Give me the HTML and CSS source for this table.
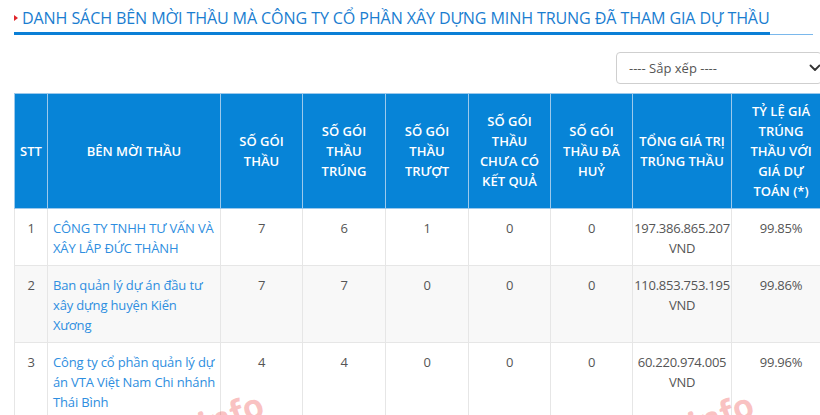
FILE: index.html
```html
<!DOCTYPE html>
<html lang="vi">
<head>
<meta charset="utf-8">
<title>Danh sách bên mời thầu</title>
<link rel="stylesheet" href="styles.css">
</head>
<body>
<div class="page">
  <div class="heading">
    <h2 class="heading-title"><span class="tri"></span>DANH SÁCH BÊN MỜI THẦU MÀ CÔNG TY CỔ PHẦN XÂY DỰNG MINH TRUNG ĐÃ THAM GIA DỰ THẦU</h2>
  </div>
  <div class="toolbar">
    <div class="select">
      <span>---- Sắp xếp ----</span>
      <svg class="chev" width="12" height="8" viewBox="0 0 12 8"><path d="M1.5 1.5 L6 6 L10.5 1.5" fill="none" stroke="#333" stroke-width="1.8" stroke-linecap="round" stroke-linejoin="round"/></svg>
    </div>
  </div>
  <table class="grid">
    <colgroup>
      <col class="c-stt"><col class="c-name"><col class="c-n1"><col class="c-n2"><col class="c-n3"><col class="c-n4"><col class="c-n5"><col class="c-val"><col class="c-pct">
    </colgroup>
    <thead>
      <tr>
        <th>STT</th>
        <th>BÊN MỜI THẦU</th>
        <th>SỐ GÓI<br>THẦU</th>
        <th>SỐ GÓI<br>THẦU<br>TRÚNG</th>
        <th>SỐ GÓI<br>THẦU<br>TRƯỢT</th>
        <th>SỐ GÓI<br>THẦU<br>CHƯA CÓ<br>KẾT QUẢ</th>
        <th>SỐ GÓI<br>THẦU ĐÃ<br>HUỶ</th>
        <th>TỔNG GIÁ TRỊ<br>TRÚNG THẦU</th>
        <th>TỶ LỆ GIÁ<br>TRÚNG<br>THẦU VỚI<br>GIÁ DỰ<br>TOÁN (*)</th>
      </tr>
    </thead>
    <tbody>
      <tr>
        <td class="ctr">1</td>
        <td class="name"><a href="#">CÔNG TY TNHH TƯ VẤN VÀ XÂY LẮP ĐỨC THÀNH</a></td>
        <td class="ctr">7</td><td class="ctr">6</td><td class="ctr">1</td><td class="ctr">0</td><td class="ctr">0</td>
        <td class="ctr">197.386.865.207 VND</td>
        <td class="ctr">99.85%</td>
      </tr>
      <tr class="alt">
        <td class="ctr">2</td>
        <td class="name"><a href="#">Ban quản lý dự án đầu tư xây dựng huyện Kiến Xương</a></td>
        <td class="ctr">7</td><td class="ctr">7</td><td class="ctr">0</td><td class="ctr">0</td><td class="ctr">0</td>
        <td class="ctr">110.853.753.195 VND</td>
        <td class="ctr">99.86%</td>
      </tr>
      <tr>
        <td class="ctr">3</td>
        <td class="name"><a href="#">Công ty cổ phần quản lý dự án VTA Việt Nam Chi nhánh Thái Bình</a></td>
        <td class="ctr">4</td><td class="ctr">4</td><td class="ctr">0</td><td class="ctr">0</td><td class="ctr">0</td>
        <td class="ctr">60.220.974.005 VND</td>
        <td class="ctr">99.96%</td>
      </tr>
    </tbody>
  </table>
  <div class="wm wm1">dauthau.info</div>
  <div class="wm wm2">dauthau.info</div>
</div>
</body>
</html>
```

FILE: styles.css
```css
html, body {
  margin: 0;
  padding: 0;
  overflow: hidden;
  background: #fff;
}
body {
  font-family: "Open Sans", "Liberation Sans", sans-serif;
  color: #555;
  font-size: 13px;
}
.page {
  position: relative;
  width: 830px;
  padding: 0 0 0 14px;
  box-sizing: border-box;
}
.heading {
  width: 799px;
  border-bottom: 1px solid #7ab8ec;
  padding-top: 6px;
}
.heading-title {
  display: inline-flex;
  align-items: center;
  margin: 0 0 -1px 0;
  font-size: 16.1px;
  letter-spacing: -0.12px;
  font-weight: 400;
  color: #1a7dd0;
  line-height: 24px;
  padding-bottom: 2px;
  border-bottom: 3px solid #0a7fd6;
  white-space: nowrap;
}
.tri {
  width: 0;
  height: 0;
  border-top: 3px solid transparent;
  border-bottom: 3px solid transparent;
  border-left: 4px solid #e0262b;
  margin-right: 4px;
}
.toolbar {
  display: flex;
  justify-content: flex-start;
  padding: 17px 0 9px 602px;
}
.select {
  width: 206px;
  height: 32px;
  box-sizing: border-box;
  border: 1px solid #cfcfcf;
  border-radius: 4px;
  display: flex;
  align-items: center;
  justify-content: space-between;
  padding: 0 0 0 12px;
  font-size: 13px;
  color: #555;
}
.grid {
  border-collapse: collapse;
  table-layout: fixed;
  width: 816px;
}
.c-stt { width: 33px; }
.c-name { width: 173px; }
.c-n1 { width: 82px; }
.c-n2 { width: 83px; }
.c-n3 { width: 83px; }
.c-n4 { width: 82px; }
.c-n5 { width: 82px; }
.c-val { width: 99px; }
.c-pct { width: 99px; }
.grid th {
  background: #0784d7;
  color: #fff;
  font-weight: 600;
  font-size: 13px;
  line-height: 20px;
  padding: 7px 3px;
  border: 1px solid #9cc9ec;
  text-align: center;
  vertical-align: middle;
  height: 100px;
}
.grid td {
  border: 1px solid #e6e6e6;
  padding: 9px 5px 7px 5px;
  line-height: 20px;
  vertical-align: top;
  color: #555;
}
.grid td.ctr { text-align: center; padding-left: 1px; padding-right: 1px; letter-spacing: -0.25px; }
.grid td.name { padding-left: 5px; padding-right: 3px; letter-spacing: -0.15px; }
.grid tr.alt td { background: #f8f8f8; }
.grid a {
  color: #2e8ee0;
  text-decoration: none;
}
.wm {
  position: absolute;
  font-size: 34px;
  line-height: 46px;
  font-weight: 700;
  color: rgba(236, 40, 40, 0.28);
  transform: rotate(-20deg);
  transform-origin: right bottom;
  white-space: nowrap;
  pointer-events: none;
  top: 378px;
}
.wm1 { right: 560px; }
.wm2 { right: 70px; }
```
